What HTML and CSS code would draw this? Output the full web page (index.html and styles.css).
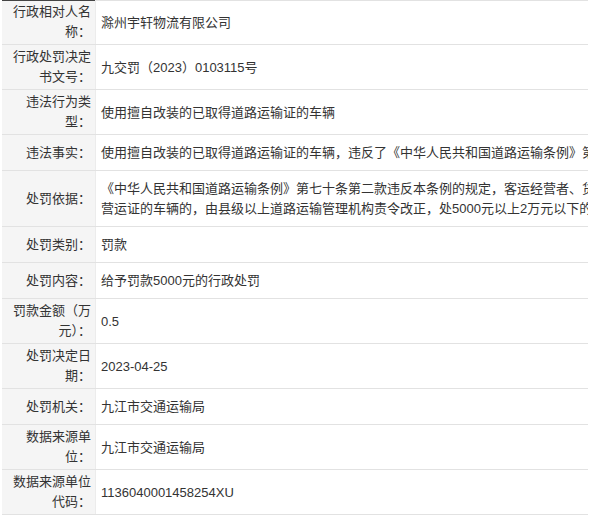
FILE: index.html
```html
<!DOCTYPE html>
<html lang="zh-CN">
<head>
    <meta charset="UTF-8">
    <meta name="viewport" content="width=device-width, initial-scale=1.0">
    <title>行政处罚信息</title>
    <link rel="stylesheet" href="styles.css">
</head>
<body>
    <div class="detail-wrap">
        <table class="info-table">
            <tr>
                <th>行政相对人名称：</th>
                <td>滁州宇轩物流有限公司</td>
            </tr>
            <tr>
                <th>行政处罚决定书文号：</th>
                <td>九交罚（2023）0103115号</td>
            </tr>
            <tr>
                <th>违法行为类型：</th>
                <td>使用擅自改装的已取得道路运输证的车辆</td>
            </tr>
            <tr>
                <th>违法事实：</th>
                <td>使用擅自改装的已取得道路运输证的车辆，违反了《中华人民共和国道路运输条例》第七十条第二款的规定</td>
            </tr>
            <tr>
                <th>处罚依据：</th>
                <td>《中华人民共和国道路运输条例》第七十条第二款违反本条例的规定，客运经营者、货运经营者使用擅自改装或者擅自改装已取得车辆<br>营运证的车辆的，由县级以上道路运输管理机构责令改正，处5000元以上2万元以下的罚款</td>
            </tr>
            <tr>
                <th>处罚类别：</th>
                <td>罚款</td>
            </tr>
            <tr>
                <th>处罚内容：</th>
                <td>给予罚款5000元的行政处罚</td>
            </tr>
            <tr>
                <th>罚款金额（万元）：</th>
                <td>0.5</td>
            </tr>
            <tr>
                <th>处罚决定日期：</th>
                <td>2023-04-25</td>
            </tr>
            <tr>
                <th>处罚机关：</th>
                <td>九江市交通运输局</td>
            </tr>
            <tr>
                <th>数据来源单位：</th>
                <td>九江市交通运输局</td>
            </tr>
            <tr>
                <th>数据来源单位代码：</th>
                <td>1136040001458254XU</td>
            </tr>
        </table>
    </div>
</body>
</html>
```

FILE: styles.css
```css
body {
    margin: 0;
    padding: 0;
    background-color: #fff;
    font-family: "Liberation Sans", "Noto Sans CJK SC", sans-serif;
    font-size: 13px;
    color: #333;
}
.detail-wrap {
    width: 588px;
    overflow: hidden;
    padding-left: 2px;
    box-sizing: border-box;
}
.info-table {
    width: 1200px;
    border-collapse: collapse;
    line-height: 20px;
}
.info-table th,
.info-table td {
    border-bottom: 1px solid #e2e2e2;
    vertical-align: middle;
}
.info-table th {
    width: 79px;
    padding: 2px 4px 2px 10px;
    background-color: #f5f5f5;
    font-weight: normal;
    text-align: right;
    border-right: 1px solid #ececec;
}
.info-table td {
    padding: 8px 5px 7px 5px;
    white-space: nowrap;
    text-align: left;
}
.info-table tr:first-child th {
    border-top: 1px solid #444;
    padding-top: 1px;
}
.info-table tr:first-child td {
    border-top: 1px solid #e2e2e2;
}
```
